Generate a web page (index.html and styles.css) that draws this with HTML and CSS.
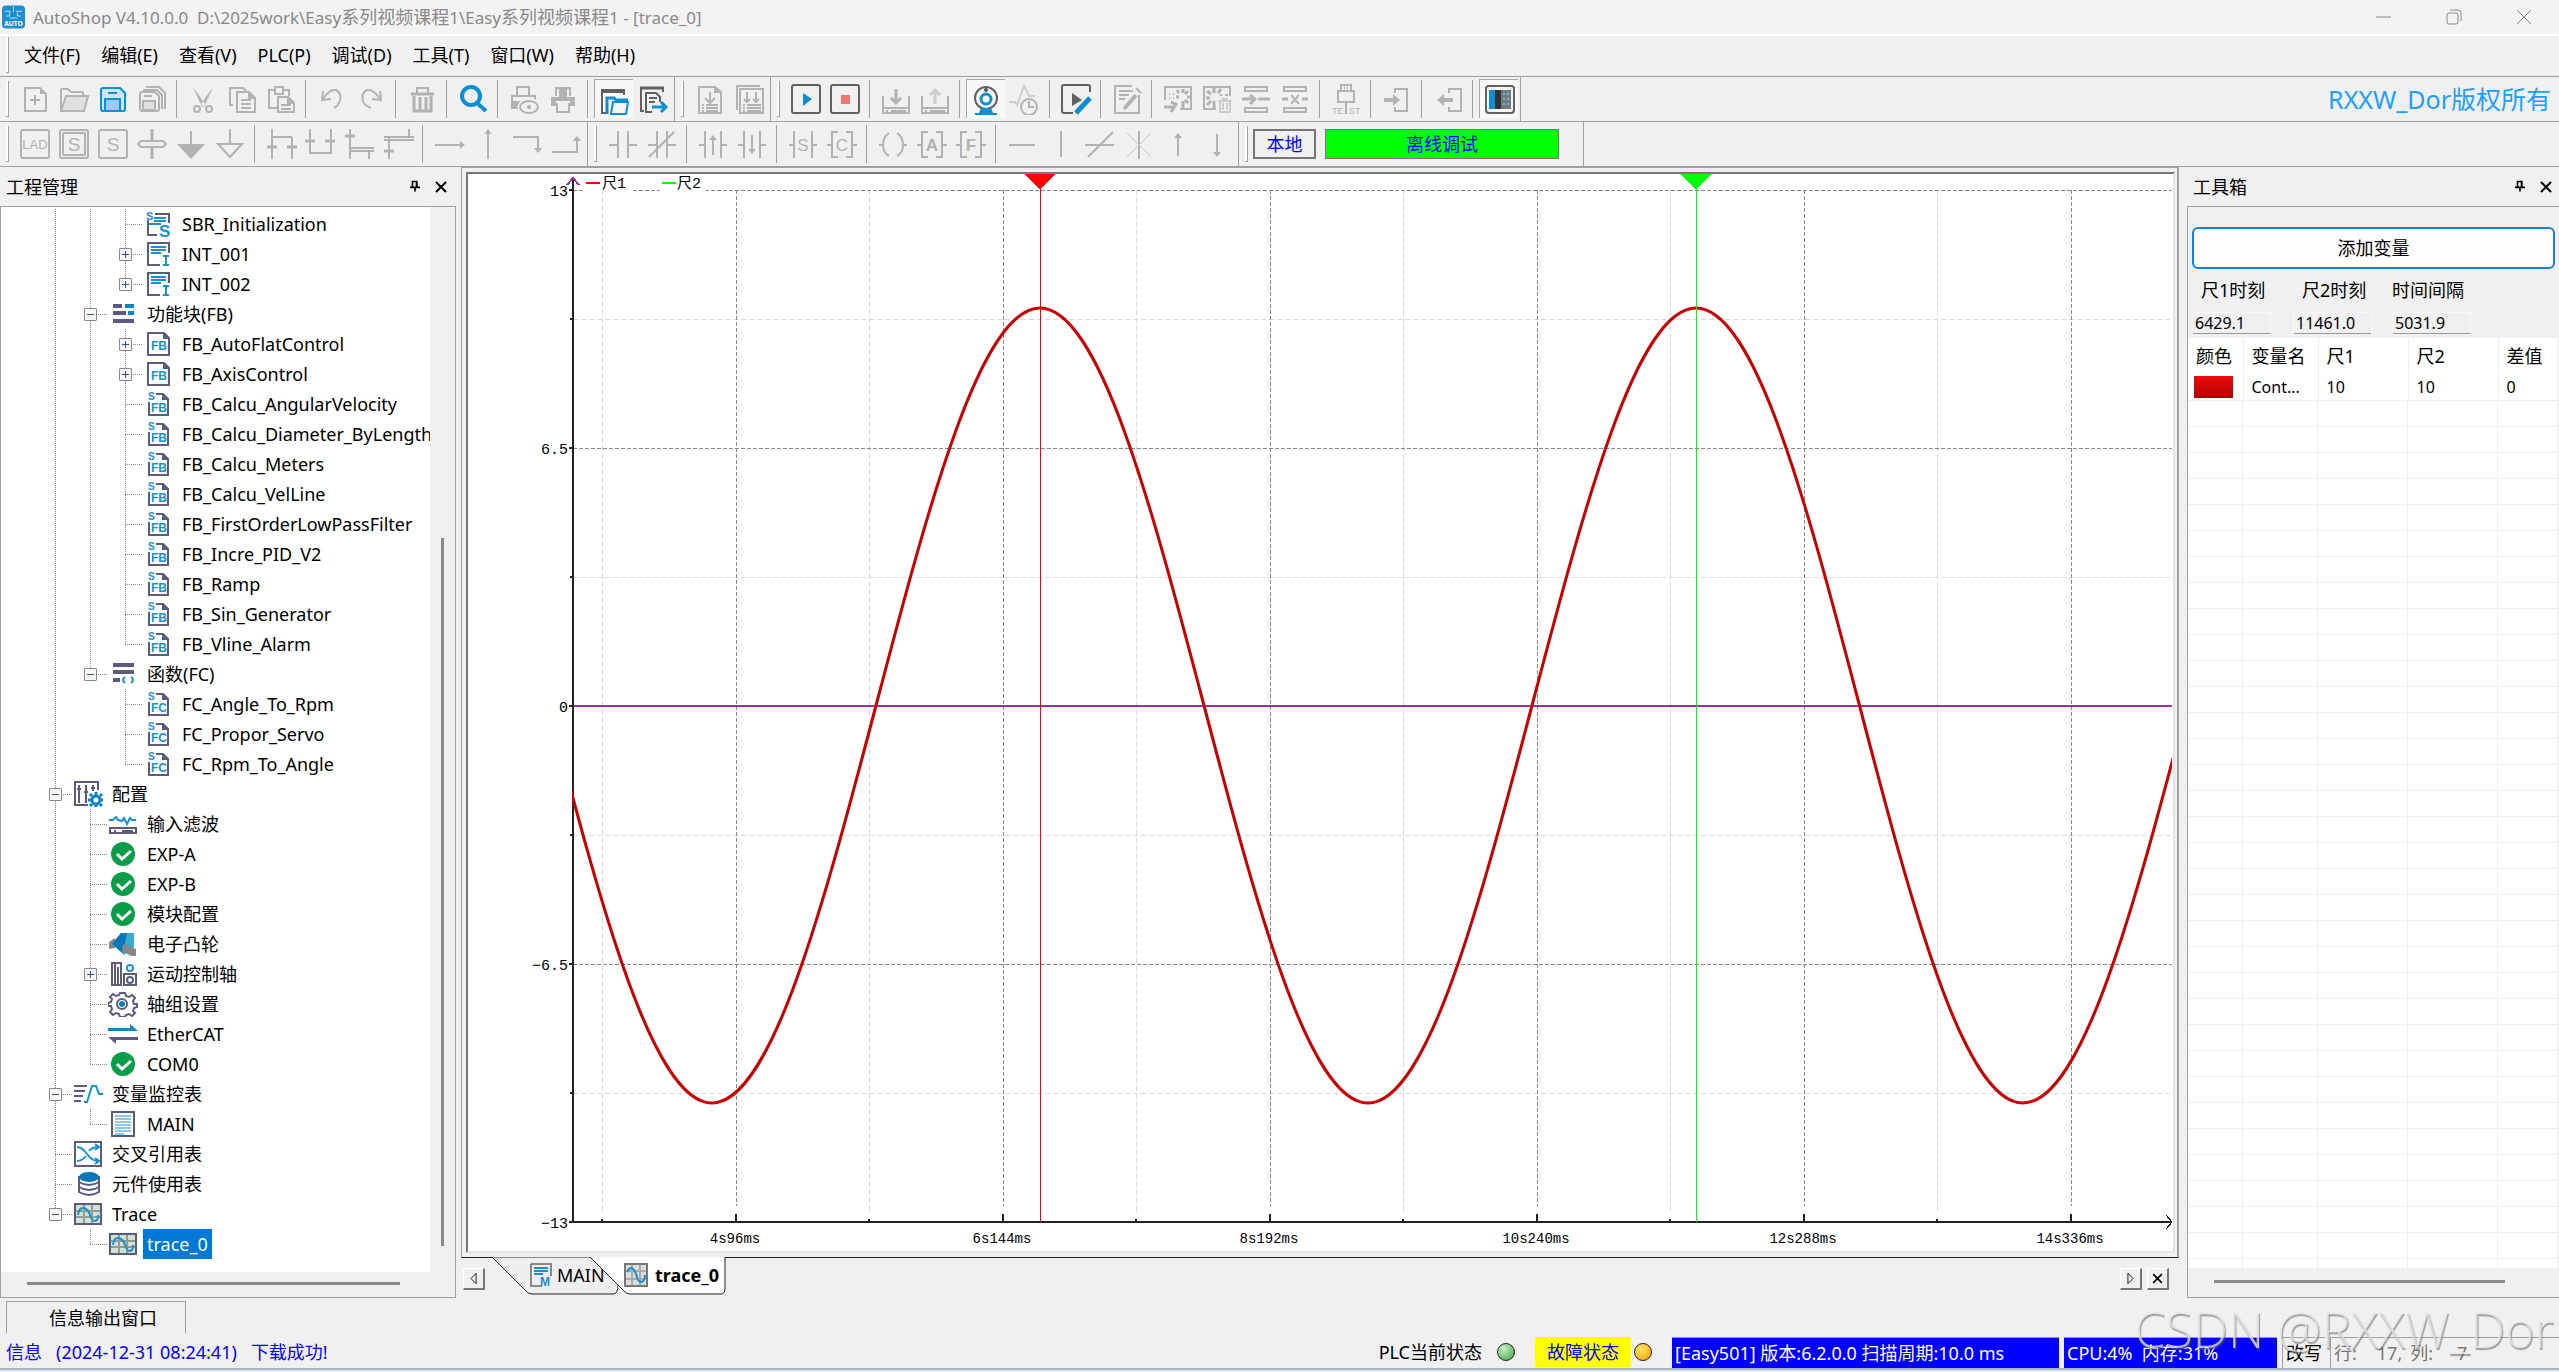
FILE: index.html
```html
<!DOCTYPE html>
<html lang="zh-CN">
<head>
<meta charset="utf-8">
<title>AutoShop V4.10.0.0</title>
<link rel="stylesheet" href="styles.css">
</head>
<body>
<svg class="defs" aria-hidden="true">
  <!-- toolbar icons -->
  <symbol id="new" viewBox="0 0 32 32"><g class="g"><path d="M6 5h15l6 6v17H6zM16 12v10M11 17h10"/><path class="gf" d="M21 5l6 6h-6z"/></g></symbol>
  <symbol id="open" viewBox="0 0 32 32"><g class="g"><path d="M3 27V7q0-1 1-1h6l3 3h11q1 0 1 1v2"/><path class="gl" d="M8 13h22l-4 15H3z"/></g></symbol>
  <symbol id="save" viewBox="0 0 32 32"><path d="M4 7q0-2 2-2h17l5 5v16q0 2-2 2H6q-2 0-2-2z" fill="#cde6f7" stroke="#0a8fd4" stroke-width="2"/><path d="M11 10h9" stroke="#0a8fd4" stroke-width="2"/><path d="M8 28V16h15v12z" fill="#a0c8f0" stroke="#0a8fd4" stroke-width="2"/></symbol>
  <symbol id="saveall" viewBox="0 0 32 32"><g class="g"><path d="M4 11q0-2 2-2h13l4 4v13q0 2-2 2H6q-2 0-2-2zM8 13h8M7 7h14l5 5v14M10 4h13l6 6v16"/><path class="gl" d="M7 27v-9h12v9z"/></g></symbol>
  <symbol id="cut" viewBox="0 0 32 32"><g class="g"><path class="gf" d="M6 4l12 17-3 3zM26 4L14 21l3 3z"/><circle cx="10" cy="26" r="3"/><circle cx="22" cy="26" r="3"/></g></symbol>
  <symbol id="copy" viewBox="0 0 32 32"><g class="g"><path d="M7 22H4V5h13l3 3M11 9h12l6 6v14H11zM15 17h10M15 21h10M15 25h10"/><path class="gf" d="M22 9l7 7h-7z"/></g></symbol>
  <symbol id="paste" viewBox="0 0 32 32"><g class="g"><path d="M12 25H4V7h6V4h8v3h6v6M10 7v4h8V7M13 14h10l6 6v9H13zM16 22h10M16 26h10"/><path class="gf" d="M22 14l7 7h-7z"/></g></symbol>
  <symbol id="undo" viewBox="0 0 32 32"><g class="g"><path d="M7 8l-1 9 9-1M7 16q6-10 13-9 6 3 4 11-2 5-6 7"/></g></symbol>
  <symbol id="redo" viewBox="0 0 32 32"><g class="g"><path d="M25 8l1 9-9-1M25 16Q19 6 12 7q-6 3-4 11 2 5 8 7"/></g></symbol>
  <symbol id="trash" viewBox="0 0 32 32"><g class="g"><path stroke-width="3" d="M5 11h23M8 13v15h17V13M14 14v13M20 14v13"/><path d="M11 10V5h11v5"/></g></symbol>
  <symbol id="search" viewBox="0 0 32 32"><circle cx="14" cy="13" r="9" fill="none" stroke="#0a8fd4" stroke-width="4"/><path d="M20 20l9 8" stroke="#0a8fd4" stroke-width="4"/></symbol>
  <symbol id="preview" viewBox="0 0 32 32"><g class="g"><path d="M9 12V4h12v8M10 25H4V13h23v3"/><path class="gf" d="M4 18h8l-4 8H4z"/><ellipse cx="21" cy="24" rx="9" ry="6"/><circle class="gf" cx="21" cy="24" r="2"/></g></symbol>
  <symbol id="print" viewBox="0 0 32 32"><g class="g"><path d="M9 13V5h14v8M10 20v9h12v-9"/><path class="gf" d="M4 14h24v9h-5v-5H9v5H4zM12 6h8v8h-8z"/></g></symbol>
  <symbol id="project" viewBox="0 0 32 32"><path d="M3 8h24" stroke="#606060" stroke-width="4"/><path d="M4 9v21h4M26 9v3" class="d"/><path d="M9 31V15h7l2 2h12" fill="none" stroke="#0a8fd4" stroke-width="3"/><path d="M15 19h15l-2 12H13z" fill="#f4f4f4" stroke="#0a8fd4" stroke-width="2"/></symbol>
  <symbol id="output" viewBox="0 0 32 32"><path d="M3 5h24" stroke="#606060" stroke-width="3"/><g class="d"><path d="M4 6v22h3M26 6v3M15 29H9V10h10l4 4v5M12 15h8M12 19h6"/></g><path d="M15 24h14M24 19l5 5-5 5" fill="none" stroke="#0a8fd4" stroke-width="3"/></symbol>
  <symbol id="compile" viewBox="0 0 32 32"><g class="g"><path d="M5 4h16l6 5v21H5zM16 9v11M11 15l5 5 5-5M8 22h2M12 22h12M8 25h2M12 25h12M8 28h2M12 28h12"/><path class="gf" d="M20 4l7 6h-7z"/></g></symbol>
  <symbol id="compileall" viewBox="0 0 32 32"><g class="g"><path d="M4 27V3h23M7 6h23v24H7zM14 9v10M11 16l3 3 3-3M23 9v10M20 16l3 3 3-3M10 22h2M14 22h14M10 25h2M14 25h14M10 28h2M14 28h14"/></g></symbol>
  <symbol id="play" viewBox="0 0 32 32"><rect class="d" x="2" y="2" width="28" height="28" rx="2"/><path d="M13 10l9 6-9 7z" fill="#0a8fd4"/></symbol>
  <symbol id="stop" viewBox="0 0 32 32"><rect class="d" x="2" y="2" width="28" height="28" rx="2"/><path d="M12 12h9v9h-9z" fill="#ee7774"/></symbol>
  <symbol id="download" viewBox="0 0 32 32"><g class="g"><path d="M3 13v17h26V13M3 25h26M6 28h2M11 28h15"/><path stroke-width="3" d="M16 6v13M11 15l5 5 5-5"/></g></symbol>
  <symbol id="upload" viewBox="0 0 32 32"><g class="g"><path d="M3 13v17h26V13M3 25h26M6 28h2M11 28h15"/><path stroke-width="3" stroke="#ccc" d="M16 21V8M11 12l5-5 5 5"/></g></symbol>
  <symbol id="monitor" viewBox="0 0 32 32"><circle class="d" cx="16" cy="15" r="11"/><circle cx="16" cy="16" r="5" fill="none" stroke="#0a8fd4" stroke-width="3"/><path d="M11 25h10l2 5h4v2H5v-2h4z" fill="#0a8fd4"/><circle cx="16" cy="7" r="2" fill="#555"/></symbol>
  <symbol id="wave" viewBox="0 0 32 32"><g class="g"><path stroke="#ccc" d="M0 19h6l2 3 7-19 5 10h6"/><circle cx="20" cy="24" r="8"/><path d="M20 18v6h5"/></g></symbol>
  <symbol id="edit" viewBox="0 0 32 32"><path class="d" d="M13 30H4q-2 0-2-2V4q0-2 2-2h24q2 0 2 2v5"/><path d="M12 10l10 7-10 6z" fill="#606060"/><path d="M16 30l14-15" stroke="#0a8fd4" stroke-width="5"/></symbol>
  <symbol id="note" viewBox="0 0 32 32"><g class="g"><path d="M21 3H4v27h24V12M8 8h14M8 12h10M8 16h6"/><path stroke-width="4" d="M13 26l12-14"/><path d="M25 5l5 5"/></g></symbol>
  <symbol id="grid1" viewBox="0 0 32 32"><g class="g"><path d="M3 17V4h26v22H18M7 11h1M11 11h1M7 15h1M11 15h1"/><path stroke-width="3" d="M21 6v4M28 14h-3M26 8l-3 3M15 7l2 3M14 14h3M26 20l-3-3M21 18v8M2 24h10M9 29l6-9M9 19l6 3"/></g></symbol>
  <symbol id="grid2" viewBox="0 0 32 32"><g class="g"><path d="M15 26H3V4h26v9M19 12h2M24 12h3"/><path stroke-width="3" d="M13 5v5M20 6l-3 4M6 8l4 3M5 15h4M6 22l4-4M13 18v8"/><path stroke="#ccc" d="M17 18h14M21 16h6M19 18v11h10V18M22 20v7M26 20v7"/></g></symbol>
  <symbol id="ins" viewBox="0 0 32 32"><g class="g"><path d="M5 4h22v4H5zM5 25h22v4H5z"/><path stroke-width="3" d="M2 16h13M18 16h12M10 12l5 4-5 5"/></g></symbol>
  <symbol id="del" viewBox="0 0 32 32"><g class="g"><path d="M5 4h22v4H5zM5 25h22v4H5z"/><path stroke-width="3" d="M3 16h6M23 16h6"/><path d="M12 12l8 9M20 12l-8 9"/></g></symbol>
  <symbol id="test" viewBox="0 0 32 32"><g class="g"><path d="M11 8V2h10v6M14 5h1M17 5h1M8 8h16v11H8zM16 20v11"/></g><text x="2" y="31" class="gt" font-size="9">TE</text><text x="19" y="31" class="gt" font-size="9">ST</text></symbol>
  <symbol id="login" viewBox="0 0 32 32"><g class="g"><path d="M14 10V6h12v22H14v-4"/><path stroke-width="4" d="M3 17h10"/><path class="gf" d="M12 11l7 6-7 6z"/></g></symbol>
  <symbol id="logout" viewBox="0 0 32 32"><g class="g"><path d="M17 10V6h12v22H17v-4"/><path stroke-width="4" d="M11 17h10"/><path class="gf" d="M12 11l-7 6 7 6z"/></g></symbol>
  <symbol id="plc" viewBox="0 0 32 32"><rect x="3" y="3" width="28" height="27" rx="3" class="d"/><path d="M6 7h6v19H6z" fill="#0a8fd4"/><path d="M12 7h6v19h-6z" fill="#333"/><path d="M18 7h10v19H18z" fill="#777"/><path d="M20 11h2M24 11h2M20 16h2M24 16h2M20 21h2M24 21h2" stroke="#4cc3ee" stroke-width="2"/></symbol>
  <!-- ladder icons -->
  <symbol id="lad" viewBox="0 0 32 32"><rect class="g" x="2" y="2" width="28" height="28" rx="2"/><text x="16" y="21" class="gt" text-anchor="middle" font-size="13">LAD</text></symbol>
  <symbol id="s2" viewBox="0 0 32 32"><rect class="g" x="2" y="2" width="28" height="28" rx="2"/><rect class="g" x="5" y="5" width="22" height="22" rx="1"/><text x="16" y="23" class="gt" text-anchor="middle" font-size="19">S</text></symbol>
  <symbol id="s1" viewBox="0 0 32 32"><rect class="g" x="2" y="2" width="28" height="28" rx="2"/><text x="16" y="23" class="gt" text-anchor="middle" font-size="19">S</text></symbol>
  <symbol id="step" viewBox="0 0 32 32"><g class="g"><path stroke-width="3" d="M16 1v11M16 20v11"/><path d="M5 13h22l3 3-3 3H5l-3-3z"/></g></symbol>
  <symbol id="tri1" viewBox="0 0 32 32"><g class="g"><path d="M16 3v14"/><path class="gf" d="M2 16h28L16 31z"/></g></symbol>
  <symbol id="tri2" viewBox="0 0 32 32"><g class="g"><path d="M16 1v14M4 16h24L16 29z"/></g></symbol>
  <symbol id="b1" viewBox="0 0 32 32"><g class="g"><path d="M7 1v30M27 9v22M7 9h20"/><path stroke-width="3" d="M2 19h10M22 19h10"/></g></symbol>
  <symbol id="b2" viewBox="0 0 32 32"><g class="g"><path d="M6 1v24h21V1"/><path stroke-width="3" d="M1 13h10M21 13h10"/></g></symbol>
  <symbol id="b3" viewBox="0 0 32 32"><g class="g"><path d="M7 1v30M7 20h24M7 23h24M26 24v7"/><path stroke-width="3" d="M2 8h10"/></g></symbol>
  <symbol id="b4" viewBox="0 0 32 32"><g class="g"><path d="M7 8v23M2 9h30M2 12h30M27 1v8"/><path stroke-width="3" d="M2 23h10"/></g></symbol>
  <symbol id="ar" viewBox="0 0 32 32"><g class="g"><path d="M2 17h26"/><path class="gf" d="M27 13l5 4-5 4z"/></g></symbol>
  <symbol id="au" viewBox="0 0 32 32"><g class="g"><path d="M16 4v27"/><path class="gf" d="M12 6l4-5 4 5z"/></g></symbol>
  <symbol id="ard" viewBox="0 0 32 32"><g class="g"><path d="M2 9h25v14"/><path class="gf" d="M23 20l4 5 4-5z"/></g></symbol>
  <symbol id="aru" viewBox="0 0 32 32"><g class="g"><path d="M2 24h25V11"/><path class="gf" d="M23 13l4-5 4 5z"/></g></symbol>
  <symbol id="no" viewBox="0 0 32 32"><g class="g"><path d="M2 17h9M21 17h9M11 3v27M21 3v27"/></g></symbol>
  <symbol id="nc" viewBox="0 0 32 32"><g class="g"><path d="M2 17h9M21 17h9M11 3v27M21 3v27M3 29L28 4"/></g></symbol>
  <symbol id="rise" viewBox="0 0 32 32"><g class="g"><path d="M2 17h6M24 17h6M8 3v27M24 3v27M16 8v19"/><path class="gf" d="M12 12l4-5 4 5z"/></g></symbol>
  <symbol id="fall" viewBox="0 0 32 32"><g class="g"><path d="M2 17h6M24 17h6M8 3v27M24 3v27M16 7v18"/><path class="gf" d="M12 21l4 5 4-5z"/></g></symbol>
  <symbol id="cs" viewBox="0 0 32 32"><g class="g"><path d="M2 17h5M25 17h5M7 3v27M25 3v27"/></g><text x="16" y="23" class="gt" text-anchor="middle" font-size="17">S</text></symbol>
  <symbol id="cc" viewBox="0 0 32 32"><g class="g"><path d="M1 17h5M26 17h5M12 4H6v25h6M20 4h6v25h-6"/></g><text x="16" y="23" class="gt" text-anchor="middle" font-size="17">C</text></symbol>
  <symbol id="coil" viewBox="0 0 32 32"><g class="g"><path d="M2 17h4M26 17h4M12 5q-6 4-6 12t6 11M20 5q6 4 6 12t-6 11"/></g></symbol>
  <symbol id="ca" viewBox="0 0 32 32"><g class="g"><path d="M1 17h5M26 17h5M12 4H6v25h6M20 4h6v25h-6"/></g><text x="16" y="23" class="gt" text-anchor="middle" font-size="17" font-weight="700">A</text></symbol>
  <symbol id="cf" viewBox="0 0 32 32"><g class="g"><path d="M1 17h5M26 17h5M12 4H6v25h6M20 4h6v25h-6"/></g><text x="16" y="23" class="gt" text-anchor="middle" font-size="17" font-weight="700">F</text></symbol>
  <symbol id="hl" viewBox="0 0 32 32"><path class="g" d="M3 17h26"/></symbol>
  <symbol id="vl" viewBox="0 0 32 32"><path class="g" d="M16 3v26"/></symbol>
  <symbol id="sl" viewBox="0 0 32 32"><path class="g" d="M1 17h29M4 29L29 4"/></symbol>
  <symbol id="ast" viewBox="0 0 32 32"><path class="g" d="M16 3v28"/><path fill="none" stroke="#c4c4c4" d="M4 5l24 24M28 5L4 29"/></symbol>
  <symbol id="up" viewBox="0 0 32 32"><g class="g"><path d="M16 8v20"/><path class="gf" d="M12 10l4-5 4 5z"/></g></symbol>
  <symbol id="dn" viewBox="0 0 32 32"><g class="g"><path d="M16 6v20"/><path class="gf" d="M12 24l4 5 4-5z"/></g></symbol>
  <!-- tree icons, 30 x 26 -->
  <symbol id="t-sbr" viewBox="0 0 30 26"><path class="p" d="M5 9v15h9M12 3h14v9"/><path class="b" d="M11 7h12M11 10h12M6 13h12"/><text x="3" y="9" class="bt" font-size="11">S</text><text x="16" y="26" class="bt" font-size="17">S</text></symbol>
  <symbol id="t-int" viewBox="0 0 30 26"><path class="p" d="M17 24H5V2h21v10"/><path class="b" d="M8 6h15M8 9h15M8 12h10M20 15h6M20 24h6M23 15v9"/></symbol>
  <symbol id="t-fbs" viewBox="0 0 30 26"><path d="M5 3h9v4H5zM5 10h13v4H5zM5 18h21v4H5z" fill="#5b5b7e"/><path d="M17 3h9v4h-9zM20 10h6v4h-6z" fill="#0a84c4"/></symbol>
  <symbol id="t-fcs" viewBox="0 0 30 26"><path d="M5 2h21v4H5zM5 9h21v4H5zM5 17h7v4H5z" fill="#5b5b7e"/><path class="b" d="M17 16q-4 3 0 6M23 16q4 3 0 6"/></symbol>
  <symbol id="t-fb" viewBox="0 0 30 26"><path class="p" d="M5 2h16l5 5v17H5z"/><path d="M20 1l7 7h-7z" fill="#5b5b7e"/><text x="16" y="19" text-anchor="middle" class="bt" font-size="12">FB</text></symbol>
  <symbol id="t-fbl" viewBox="0 0 30 26"><path class="p" d="M6 11v13h19V8l-5-5h-7"/><path d="M19 2l7 7h-7z" fill="#5b5b7e"/><text x="16" y="21" text-anchor="middle" class="bt" font-size="12">FB</text><text x="5" y="9" class="bt" font-size="10">S</text></symbol>
  <symbol id="t-fc" viewBox="0 0 30 26"><path class="p" d="M6 11v13h19V8l-5-5h-7"/><path d="M19 2l7 7h-7z" fill="#5b5b7e"/><text x="16" y="21" text-anchor="middle" class="bt" font-size="12">FC</text><text x="5" y="9" class="bt" font-size="10">S</text></symbol>
  <symbol id="t-cfg" viewBox="0 0 30 26"><path class="p" d="M15 24H2V1h23v8M6 4v18M13 4v18M20 4v6M4 8h4M11 11h4M18 7h4"/><circle cx="23" cy="19" r="4" fill="none" stroke="#0a84c4" stroke-width="3"/><path d="M23 11v3M23 24v2M15 19h3M28 19h2M17 13l2 2M29 13l-2 2M17 25l2-2M29 25l-2-2" stroke="#0a84c4" stroke-width="3"/></symbol>
  <symbol id="t-flt" viewBox="0 0 30 26"><path class="b" d="M1 9h4l3-3 2 3 4 1 2-3 3 6 3-6 2 2h4"/><path class="p" d="M2 17h26v5H2zM6 20h2M14 20h11"/></symbol>
  <symbol id="t-ok" viewBox="0 0 30 26"><circle cx="15" cy="13" r="12" fill="#0a9c48"/><path d="M9 13l5 5 9-8" fill="none" stroke="#fff" stroke-width="3"/></symbol>
  <symbol id="t-cam" viewBox="0 0 30 26"><path d="M1 11l6-4v10l-6 1z" fill="#888"/><path d="M4 13L13 2h13v14l-10 8z" fill="#3aa9cf"/><path d="M4 13L13 2l6 0-4 20z" fill="#0a78b8"/><path d="M15 13l13 5v7h-5l-9-5z" fill="#888"/></symbol>
  <symbol id="t-axis" viewBox="0 0 30 26"><path class="p" d="M4 2h9v22H4zM7 2v22M10 6v18M16 13h12v11H16z"/><circle class="p" cx="22" cy="19" r="3"/><circle class="b" cx="22" cy="7" r="3"/></symbol>
  <symbol id="t-gear" viewBox="0 0 30 26"><path class="p" d="M12 2h5l1 3 3 1 3-2 3 3-2 3 1 3 3 0v3l-3 1-1 3 2 2-3 3-3-2-3 1-1 2h-5l-1-3-3-1-3 2-3-3 2-3-1-3-3 0v-3l3-1 1-3-2-2 3-3 3 2 3-1z"/><circle cx="14" cy="13" r="3" fill="#0a84c4"/><circle class="p" cx="14" cy="13" r="5"/></symbol>
  <symbol id="t-eth" viewBox="0 0 30 26"><path d="M0 7h22V3l8 7H0z" fill="#0a84c4"/><path d="M30 19H8v4l-8-7h30z" fill="#5b5b7e"/></symbol>
  <symbol id="t-var" viewBox="0 0 30 26"><path class="p" d="M1 5h13M1 10h11M1 15h9M1 20h7"/><path class="b" d="M11 21h3l5-16h4l3 8h4"/></symbol>
  <symbol id="t-main" viewBox="0 0 30 26"><path class="p" d="M4 1h22v24H4z"/><path class="b" d="M7 5h16M7 8h16M7 11h16M7 14h16M7 17h16M7 20h16M7 23h9" style="stroke-width:1"/></symbol>
  <symbol id="t-x" viewBox="0 0 30 26"><path class="p" d="M2 1h26v24H2z"/><path class="b" d="M4 6q5 0 10 7t11 7M4 20q5 0 9-5M16 10q3-4 9-4M22 3l4 3-4 3M22 17l4 3-4 3"/></symbol>
  <symbol id="t-db" viewBox="0 0 30 26"><path d="M6 5v16q10 7 20 0V5" fill="#fff"/><path class="p" d="M6 5v16q10 6 20 0V5M6 11q10 6 20 0M6 16q10 6 20 0"/><ellipse cx="16" cy="6" rx="10" ry="5" fill="#0a78b8"/></symbol>
  <symbol id="t-tr" viewBox="0 0 30 26"><path d="M2 3h26v20H2z" fill="#cfe3d0" stroke="#5b5b7e" stroke-width="2"/><path d="M11 4v18M19 4v18M3 10h24M3 16h24" stroke="#999" stroke-width="2"/><path class="b" d="M5 14q1-8 6-7 4 1 6 7t5 6q3 0 3-6"/></symbol>
  <symbol id="pin" viewBox="0 0 12 14"><path d="M3 8V1h5v7M0 8h12M6 8v5" fill="none" stroke="#000" stroke-width="2"/><path d="M7 1h2v7H7z"/></symbol>
  <symbol id="cross" viewBox="0 0 12 12"><path d="M1 1l10 10M11 1L1 11" stroke="#000" stroke-width="2"/></symbol>
</svg>

<header class="title">
  <svg class="logo" viewBox="0 0 24 24"><rect width="24" height="24" rx="4" fill="#1b8fd2"/><path d="M3 6h6M15 6h6M12 1v6M4 11h4V7M20 11h-4V7M8 13h8" stroke="#bfe3fa" stroke-width="1" fill="none"/><text x="12" y="21" text-anchor="middle" font-size="7" font-weight="700" fill="#fff">AUTO</text></svg>
  <span>AutoShop V4.10.0.0&nbsp; D:\2025work\Easy<span class="zh">系列视频课程</span>1\Easy<span class="zh">系列视频课程</span>1 - [trace_0]</span>
  <div class="winbtns">
    <button aria-label="最小化"><svg width="16" height="16"><path d="M0 8h15" stroke="#888"/></svg></button>
    <button aria-label="还原"><svg width="16" height="16" fill="none" stroke="#888"><rect x="1" y="4" width="11" height="11" rx="2"/><path d="M4 1h8q3 0 3 3v8"/></svg></button>
    <button aria-label="关闭"><svg width="16" height="16"><path d="M1 1l14 14M15 1L1 15" stroke="#888"/></svg></button>
  </div>
</header>

<nav class="menu">
  <i class="grip"></i>
  <button>文件(F)</button><button>编辑(E)</button><button>查看(V)</button><button>PLC(P)</button><button>调试(D)</button><button>工具(T)</button><button>窗口(W)</button><button>帮助(H)</button>
</nav>

<div class="bar">
  <div class="band"><i class="grip"></i>
    <button aria-label="新建"><svg><use href="#new"/></svg></button><button aria-label="打开"><svg><use href="#open"/></svg></button><button aria-label="保存"><svg><use href="#save"/></svg></button><button aria-label="全部保存"><svg><use href="#saveall"/></svg></button><i class="sep"></i>
    <button aria-label="剪切"><svg><use href="#cut"/></svg></button><button aria-label="复制"><svg><use href="#copy"/></svg></button><button aria-label="粘贴"><svg><use href="#paste"/></svg></button><i class="sep"></i>
    <button aria-label="撤销"><svg><use href="#undo"/></svg></button><button aria-label="重做"><svg><use href="#redo"/></svg></button><i class="sep"></i>
    <button aria-label="删除"><svg><use href="#trash"/></svg></button><i class="sep"></i>
    <button aria-label="查找"><svg><use href="#search"/></svg></button><i class="sep"></i>
    <button aria-label="打印预览"><svg><use href="#preview"/></svg></button><button aria-label="打印"><svg><use href="#print"/></svg></button><i class="sep"></i>
    <button class="on" aria-label="工程管理"><svg><use href="#project"/></svg></button><button aria-label="信息输出"><svg><use href="#output"/></svg></button>
  </div>
  <div class="band"><i class="grip"></i>
    <button aria-label="编译"><svg><use href="#compile"/></svg></button><button aria-label="全部编译"><svg><use href="#compileall"/></svg></button>
  </div>
  <div class="band"><i class="grip"></i>
    <button aria-label="运行"><svg><use href="#play"/></svg></button><button aria-label="停止"><svg><use href="#stop"/></svg></button><i class="sep"></i>
    <button aria-label="下载"><svg><use href="#download"/></svg></button><button aria-label="上传"><svg><use href="#upload"/></svg></button><i class="sep"></i>
    <button class="on" aria-label="监控"><svg><use href="#monitor"/></svg></button><button aria-label="示波"><svg><use href="#wave"/></svg></button><i class="sep"></i>
    <button aria-label="在线修改"><svg><use href="#edit"/></svg></button><i class="sep"></i>
    <button aria-label="注释"><svg><use href="#note"/></svg></button><i class="sep"></i>
    <button aria-label="插入网络"><svg><use href="#grid1"/></svg></button><button aria-label="删除网络"><svg><use href="#grid2"/></svg></button><button aria-label="插入行"><svg><use href="#ins"/></svg></button><button aria-label="删除行"><svg><use href="#del"/></svg></button><i class="sep"></i>
    <button aria-label="测试"><svg><use href="#test"/></svg></button><i class="sep"></i>
    <button aria-label="登录"><svg><use href="#login"/></svg></button><i class="sep"></i>
    <button aria-label="退出"><svg><use href="#logout"/></svg></button><i class="sep"></i>
    <button class="on" aria-label="工具箱"><svg><use href="#plc"/></svg></button>
  </div>
  <span class="owner">RXXW_Dor版权所有</span>
</div>

<div class="bar">
  <div class="band"><i class="grip"></i>
    <button aria-label="LAD"><svg><use href="#lad"/></svg></button><button aria-label="初始步"><svg><use href="#s2"/></svg></button><button aria-label="步"><svg><use href="#s1"/></svg></button><button aria-label="转移"><svg><use href="#step"/></svg></button><button aria-label="跳转"><svg><use href="#tri1"/></svg></button><button aria-label="复位"><svg><use href="#tri2"/></svg></button><i class="sep"></i>
    <button aria-label="选择分支"><svg><use href="#b1"/></svg></button><button aria-label="选择合并"><svg><use href="#b2"/></svg></button><button aria-label="并行分支"><svg><use href="#b3"/></svg></button><button aria-label="并行合并"><svg><use href="#b4"/></svg></button><i class="sep"></i>
    <button aria-label="右"><svg><use href="#ar"/></svg></button><button aria-label="上"><svg><use href="#au"/></svg></button><button aria-label="右下"><svg><use href="#ard"/></svg></button><button aria-label="右上"><svg><use href="#aru"/></svg></button>
  </div>
  <div class="band"><i class="grip"></i>
    <button aria-label="常开"><svg><use href="#no"/></svg></button><button aria-label="常闭"><svg><use href="#nc"/></svg></button><i class="sep"></i>
    <button aria-label="上升沿"><svg><use href="#rise"/></svg></button><button aria-label="下降沿"><svg><use href="#fall"/></svg></button><i class="sep"></i>
    <button aria-label="S触点"><svg><use href="#cs"/></svg></button><button aria-label="比较"><svg><use href="#cc"/></svg></button><i class="sep"></i>
    <button aria-label="线圈"><svg><use href="#coil"/></svg></button><button aria-label="应用指令"><svg><use href="#ca"/></svg></button><button aria-label="功能块"><svg><use href="#cf"/></svg></button><i class="sep"></i>
    <button aria-label="横线"><svg><use href="#hl"/></svg></button><button aria-label="竖线"><svg><use href="#vl"/></svg></button><button aria-label="取反"><svg><use href="#sl"/></svg></button><button aria-label="删除线"><svg><use href="#ast"/></svg></button><button aria-label="上移"><svg><use href="#up"/></svg></button><button aria-label="下移"><svg><use href="#dn"/></svg></button>
  </div>
  <div class="band debug"><i class="grip"></i>
    <button class="local">本地</button><button class="offline">离线调试</button>
  </div>
</div>

<main>
  <aside class="panel left">
    <h2>工程管理<svg class="pin"><use href="#pin"/></svg><svg class="cross"><use href="#cross"/></svg></h2>
    <div class="box">
      <div class="treewrap">
      <ul class="tree">
        <li class="cont"><ul>
          <li class="cont"><ul>
            <li><div class="row"><i></i><svg><use href="#t-sbr"/></svg><span>SBR_Initialization</span></div></li>
            <li><div class="row"><i class="tg plus"></i><svg><use href="#t-int"/></svg><span>INT_001</span></div></li>
            <li><div class="row"><i class="tg plus"></i><svg><use href="#t-int"/></svg><span>INT_002</span></div></li>
          </ul></li>
          <li><div class="row"><i class="tg"></i><svg><use href="#t-fbs"/></svg><span>功能块(FB)</span></div><ul>
            <li><div class="row"><i class="tg plus"></i><svg><use href="#t-fb"/></svg><span>FB_AutoFlatControl</span></div></li>
            <li><div class="row"><i class="tg plus"></i><svg><use href="#t-fb"/></svg><span>FB_AxisControl</span></div></li>
            <li><div class="row"><i></i><svg><use href="#t-fbl"/></svg><span>FB_Calcu_AngularVelocity</span></div></li>
            <li><div class="row"><i></i><svg><use href="#t-fbl"/></svg><span>FB_Calcu_Diameter_ByLength</span></div></li>
            <li><div class="row"><i></i><svg><use href="#t-fbl"/></svg><span>FB_Calcu_Meters</span></div></li>
            <li><div class="row"><i></i><svg><use href="#t-fbl"/></svg><span>FB_Calcu_VelLine</span></div></li>
            <li><div class="row"><i></i><svg><use href="#t-fbl"/></svg><span>FB_FirstOrderLowPassFilter</span></div></li>
            <li><div class="row"><i></i><svg><use href="#t-fbl"/></svg><span>FB_Incre_PID_V2</span></div></li>
            <li><div class="row"><i></i><svg><use href="#t-fbl"/></svg><span>FB_Ramp</span></div></li>
            <li><div class="row"><i></i><svg><use href="#t-fbl"/></svg><span>FB_Sin_Generator</span></div></li>
            <li><div class="row"><i></i><svg><use href="#t-fbl"/></svg><span>FB_Vline_Alarm</span></div></li>
          </ul></li>
          <li><div class="row"><i class="tg"></i><svg><use href="#t-fcs"/></svg><span>函数(FC)</span></div><ul>
            <li><div class="row"><i></i><svg><use href="#t-fc"/></svg><span>FC_Angle_To_Rpm</span></div></li>
            <li><div class="row"><i></i><svg><use href="#t-fc"/></svg><span>FC_Propor_Servo</span></div></li>
            <li><div class="row"><i></i><svg><use href="#t-fc"/></svg><span>FC_Rpm_To_Angle</span></div></li>
          </ul></li>
        </ul></li>
        <li><div class="row"><i class="tg"></i><svg><use href="#t-cfg"/></svg><span>配置</span></div><ul>
          <li><div class="row"><i></i><svg><use href="#t-flt"/></svg><span>输入滤波</span></div></li>
          <li><div class="row"><i></i><svg><use href="#t-ok"/></svg><span>EXP-A</span></div></li>
          <li><div class="row"><i></i><svg><use href="#t-ok"/></svg><span>EXP-B</span></div></li>
          <li><div class="row"><i></i><svg><use href="#t-ok"/></svg><span>模块配置</span></div></li>
          <li><div class="row"><i></i><svg><use href="#t-cam"/></svg><span>电子凸轮</span></div></li>
          <li><div class="row"><i class="tg plus"></i><svg><use href="#t-axis"/></svg><span>运动控制轴</span></div></li>
          <li><div class="row"><i></i><svg><use href="#t-gear"/></svg><span>轴组设置</span></div></li>
          <li><div class="row"><i></i><svg><use href="#t-eth"/></svg><span>EtherCAT</span></div></li>
          <li><div class="row"><i></i><svg><use href="#t-ok"/></svg><span>COM0</span></div></li>
        </ul></li>
        <li><div class="row"><i class="tg"></i><svg><use href="#t-var"/></svg><span>变量监控表</span></div><ul>
          <li><div class="row"><i></i><svg><use href="#t-main"/></svg><span>MAIN</span></div></li>
        </ul></li>
        <li><div class="row"><i></i><svg><use href="#t-x"/></svg><span>交叉引用表</span></div></li>
        <li><div class="row"><i></i><svg><use href="#t-db"/></svg><span>元件使用表</span></div></li>
        <li><div class="row"><i class="tg"></i><svg><use href="#t-tr"/></svg><span>Trace</span></div><ul>
          <li><div class="row"><i></i><svg><use href="#t-tr"/></svg><span class="sel">trace_0</span></div></li>
        </ul></li>
      </ul>
      <div class="vscroll"><i></i></div>
      </div>
      <div class="hscroll"><i></i></div>
    </div>
  </aside>

  <section class="mdi">
    <div class="frame"><div class="canvas">
      <svg viewBox="468 174 1705 1077" class="chart" role="img" aria-label="trace_0">
        <g class="minor">
          <path d="M602 190V1211M869 190V1211M1136 190V1211M1403 190V1211M1670 190V1211M1937 190V1211M573 319H2172M573 577H2172M573 835H2172M573 1093H2172"/>
        </g>
        <g class="major">
          <path d="M736 190V1206M1003 190V1206M1270 190V1206M1537 190V1206M1804 190V1206M2071 190V1206M573 190H2172M573 448H2172M573 964H2172"/>
        </g>
        <path d="M573 706H2172" stroke="#800080" stroke-width="2" opacity=".8"/>
        <path class="axis" d="M573 180V1222H2172M569 190h4M570 319h3M569 448h4M570 577h3M569 706h4M570 835h3M569 964h4M570 1093h3M569 1222h4M736 1214v8M1003 1214v8M1270 1214v8M1537 1214v8M1804 1214v8M2071 1214v8M602 1219v3M869 1219v3M1136 1219v3M1403 1219v3M1670 1219v3M1937 1219v3"/>
        <path d="M2166 1215l6 7-6 7" fill="none" stroke="#111"/>
        <path d="M567 185l6-7 6 7" fill="none" stroke="#a030a0" stroke-width="2"/>
        <path d="M584 176h48v16h-48zM660 176h46v16h-46z" fill="#fff"/>
        <path d="M586 183h14" stroke="#f00" stroke-width="2"/><path d="M662 183h14" stroke="#0f0" stroke-width="2"/>
        <g class="lbl"><text x="602" y="188">尺1</text><text x="677" y="188">尺2</text></g>
        <g class="lbl end"><text x="568" y="196">13</text><text x="568" y="454">6.5</text><text x="568" y="712">0</text><text x="568" y="970">−6.5</text><text x="568" y="1228">−13</text></g>
        <g class="lbl mid"><text x="735" y="1243">4s96ms</text><text x="1002" y="1243">6s144ms</text><text x="1269" y="1243">8s192ms</text><text x="1536" y="1243">10s240ms</text><text x="1803" y="1243">12s288ms</text><text x="2070" y="1243">14s336ms</text></g>
        <clipPath id="plot"><path d="M572 190H2172V1222H572z"/></clipPath>
        <path clip-path="url(#plot)" d="M385 308C504 308 593 1103 712 1103S921 308 1040 308 1249 1103 1368 1103 1577 308 1696 308 1904 1103 2023 1103 2232 308 2351 308" class="curve"/>
        <path d="M1040 188V1222" stroke="#f00"/><path d="M1025 174h30l-15 16z" fill="#f00"/>
        <path d="M1696 188V1222" stroke="#0f0"/><path d="M1681 174h30l-15 16z" fill="#0f0"/>
      </svg>
    </div></div>
    <div class="tabs">
      <button class="sq" aria-label="向左"><svg viewBox="0 0 22 22"><path d="M14 5v12l-6-6z" fill="none" stroke="#000"/></svg></button>
      <button class="tab t1"><svg class="shape" viewBox="0 0 126 38"><path d="M0 0l33 33q3 4 7 4h82q4-1 4-9V0z" fill="#efefef" stroke="#222"/></svg><svg class="ic" viewBox="0 0 24 24"><path d="M2 1h20v12M2 1v22h11" fill="none" stroke="#888" stroke-width="2"/><path class="b" d="M5 5h14M5 8h14M5 11h9"/><text x="11" y="23" class="bt" font-size="12">M</text></svg>MAIN</button>
      <button class="tab t2"><svg class="shape" viewBox="0 0 136 38"><path d="M0 0l33 33q3 4 7 4h92q3-1 3-5V0" fill="#fff" stroke="#222"/><path d="M1 0h133" stroke="#fff" stroke-width="2"/></svg><svg class="ic" viewBox="0 0 24 24"><path d="M1 1h22v22H1z" fill="#ddd" stroke="#777" stroke-width="2"/><path d="M8 2v20M16 2v20M2 8h20M2 16h20" stroke="#aaa" stroke-width="2"/><path class="b" d="M3 9q3-6 6-3 3 3 4 8t5 5q3-2 3-7"/></svg><b>trace_0</b></button>
      <div class="grow"></div>
      <button class="sq" aria-label="向右"><svg viewBox="0 0 22 22"><path d="M8 5v12l6-6z" fill="none" stroke="#000"/></svg></button>
      <button class="sq" aria-label="关闭"><svg viewBox="0 0 22 22"><path d="M6 6l10 10M16 6L6 16" stroke="#000" stroke-width="2"/></svg></button>
    </div>
  </section>

  <aside class="panel right">
    <h2>工具箱<svg class="pin"><use href="#pin"/></svg><svg class="cross"><use href="#cross"/></svg></h2>
    <div class="box">
      <button class="add">添加变量</button>
      <div class="times">
        <label>尺1时刻<input value="6429.1"></label>
        <label>尺2时刻<input value="11461.0"></label>
        <label class="wide">时间间隔<input value="5031.9"></label>
      </div>
      <div class="tablewrap">
      <table>
        <colgroup><col class="c1"><col class="c2"><col class="c3"><col class="c3"><col></colgroup>
        <thead><tr><th>颜色</th><th>变量名</th><th>尺1</th><th>尺2</th><th>差值</th></tr></thead>
        <tbody><tr><td><i class="swatch"></i></td><td>Cont...</td><td>10</td><td>10</td><td>0</td></tr></tbody>
      </table>
      <div class="lines"><i class="c1"></i><i class="c2"></i><i class="c3"></i><i class="c3"></i><i class="rest"></i></div>
      </div>
      <div class="hscroll"><i></i></div>
    </div>
  </aside>
</main>

<div class="outtabs"><button>信息输出窗口</button></div>
<footer>
  <div class="msg"><span>信息</span><span>(2024-12-31 08:24:41)</span><span>下载成功!</span></div>
  <span class="plcstate">PLC当前状态</span><i class="led green"></i>
  <span class="fault">故障状态</span><i class="led orange"></i>
  <span class="blue ver">[Easy501] 版本:6.2.0.0 扫描周期:10.0 ms</span>
  <span class="blue cpu">CPU:4%&nbsp; 内存:31%</span>
  <span class="cell mode">改写</span>
  <span class="cell pos"><span>行:</span><span>17,</span><span>列:</span><span>7</span></span>
</footer>
<div class="edge"></div>
<div class="mark">CSDN @RXXW_Dor</div>
</body>
</html>
```
FILE: styles.css
```css
* { box-sizing: border-box; }
body {
  margin: 0; height: 100vh; overflow: hidden; display: flex; flex-direction: column;
  background: #f0f0f0; color: #000;
  font: 18px/24px "Noto Sans", "Noto Sans CJK SC", sans-serif;
}
button { font: inherit; color: inherit; background: none; border: 0; padding: 0; margin: 0; }
ul { list-style: none; margin: 0; padding: 0; }
svg { display: block; flex: none; }
.defs { position: absolute; width: 0; height: 0; }

/* shared icon strokes */
.g { fill: none; stroke: #b2b2b2; stroke-width: 2; }
.gf { fill: #b2b2b2; stroke: none; }
.gl { fill: #e0e0e0; }
.gt { fill: #b2b2b2; font-family: "Liberation Sans", sans-serif; }
.d { fill: none; stroke: #606060; stroke-width: 2; }
.p { fill: none; stroke: #5b5b7e; stroke-width: 2; }
.b { fill: none; stroke: #1a90cc; stroke-width: 2; }
.bt { fill: #1a90cc; font-family: "Liberation Sans", sans-serif; font-weight: 700; }

.title { height: 36px; display: flex; align-items: center; background: #f3f3f3; border-bottom: 2px solid #fff; color: #888; font-size: 17px; }
.zh { font-size: 18px; }
.logo { width: 23px; height: 24px; margin: 0 8px 0 2px; }
.winbtns { margin-left: auto; display: flex; }
.winbtns button { width: 70px; height: 34px; display: grid; place-items: center; }

.menu { height: 41px; display: flex; align-items: center; gap: 1px; padding-bottom: 2px; border-bottom: 1px solid #a0a0a0; }
.menu .grip { margin-right: 4px; }
.menu button { padding: 0 10px; height: 36px; }
.grip { flex: none; width: 3px; height: 36px; margin: 0 6px; border: solid #a0a0a0; border-width: 0 1px 1px 0; background: #fff; }

.bar { height: 45px; display: flex; border-bottom: 1px solid #a0a0a0; }
.band { display: flex; align-items: center; padding: 0 2px 1px 0; border-right: 1px solid #a0a0a0; }
.band button { width: 39px; height: 39px; display: grid; place-items: center; }
.band svg { width: 32px; height: 32px; }
.band .on { background: #f8f8f8; border: solid #a8a8a8; border-width: 1px 0 0 1px; }
.sep { width: 1px; height: 38px; margin: 0 6px 0 5px; background: #a0a0a0; }
.owner { margin: auto 8px auto auto; font-size: 25px; line-height: 32px; color: #1e9fff; }
.debug { padding-right: 24px; gap: 9px; }
.debug .grip { margin-right: -4px; }
.band .local { width: 63px; height: 30px; border: 2px solid #777; color: #00f; }
.band .offline { width: 234px; height: 30px; background: #0f0; border: 1px solid #777; color: #00f; }

main { flex: 1; min-height: 0; display: grid; grid-template-columns: 461px minmax(0, 1fr) 372px; column-gap: 0; }
.panel { display: flex; flex-direction: column; min-height: 0; }
.panel h2 { margin: 0; height: 39px; padding: 0 7px 0 6px; display: flex; align-items: center; font-size: 18px; font-weight: 400; }
.pin { width: 10px; height: 13px; margin-left: auto; }
.cross { width: 12px; height: 12px; margin-left: 15px; }
.box { flex: 1; min-height: 0; display: flex; flex-direction: column; border: 1px solid #a0a0a0; }
.left { padding-right: 5px; }
.left h2 { padding-right: 9px; }
.treewrap { flex: 1; min-height: 0; display: flex; }
.tree { flex: 1; min-width: 0; overflow: hidden; background: #fff; padding: 2px 0 0 37px; }
.tree li > ul { margin-left: 35px; }
.tree li {
  background:
    repeating-linear-gradient(#888 0 1px, transparent 1px 2px) 17px 0 / 1px 100% no-repeat,
    repeating-linear-gradient(90deg, #888 0 1px, transparent 1px 2px) 17px 15px / 18px 1px no-repeat;
}
.tree li:last-child { background-size: 1px 15px, 18px 1px; }
.tree li.cont { background-size: 1px 100%, 0 0; }
.row { display: flex; align-items: center; height: 30px; }
.row > i { flex: none; width: 35px; height: 14px; }
.row > .tg {
  width: 13px; height: 13px; margin: 0 11px; border: 1px solid #888; border-radius: 1px;
  background: linear-gradient(#3c50a0, #3c50a0) center / 7px 1px no-repeat, #f6f6f6;
}
.row > .tg.plus {
  background: linear-gradient(#3c50a0, #3c50a0) center / 7px 1px no-repeat, linear-gradient(#3c50a0, #3c50a0) center / 1px 7px no-repeat, #f6f6f6;
}
.row svg { width: 30px; height: 26px; margin-right: 5px; }
.row span { padding: 0 4px; line-height: 30px; white-space: nowrap; }
.row .sel { background: #0078d7; color: #fff; }
.vscroll { width: 25px; padding: 331px 0 26px 11px; }
.vscroll i { display: block; width: 3px; height: 100%; background: #8a8a8a; }
.hscroll { height: 25px; padding: 10px 55px 0 26px; }
.hscroll i { display: block; height: 3px; background: #8a8a8a; }

.mdi { display: flex; flex-direction: column; min-width: 0; min-height: 0; }
.frame { flex: 1; min-height: 0; padding: 4px 2px 4px 4px; border: solid; border-width: 1px 2px 1px 1px; border-color: #a0a0a0 #a0a0a0 #222 #a0a0a0; margin-right: 8px; }
.canvas { height: 100%; background: #fff; border: 2px solid #777; border-right-color: #e3e3e3; border-bottom-color: #e3e3e3; }
.chart { width: 100%; height: 100%; }
.minor { fill: none; stroke: #d8d8d8; stroke-dasharray: 5 3; }
.major { fill: none; stroke: #888; stroke-dasharray: 4 2; }
.chart path { shape-rendering: crispEdges; }
.axis { fill: none; stroke: #222; stroke-width: 2; }
.chart .curve { fill: none; stroke: #c80000; stroke-width: 3; shape-rendering: auto; }
.lbl { font: 15px "Liberation Mono", "Noto Sans CJK SC", monospace; }
.end { text-anchor: end; }
.mid { text-anchor: middle; font-size: 14px; }

.tabs { height: 40px; display: flex; align-items: flex-start; margin-right: 8px; }
.sq { width: 22px; height: 22px; margin: 10px 3px 0 2px; border: solid; border-width: 1px 2px 2px 1px; border-color: #fff #777 #777 #fff; }
.sq svg { width: 19px; height: 19px; }
.sq:last-child { margin-right: 10px; }
.tab { position: relative; height: 38px; display: flex; align-items: center; margin-top: -1px; padding-bottom: 2px; }
.shape { position: absolute; inset: 0; width: 100%; height: 100%; z-index: -1; }
.tab .ic { width: 24px; height: 24px; margin-right: 4px; }
.t1 { width: 126px; margin-left: 4px; padding-left: 37px; z-index: 1; }
.t2 { width: 136px; margin-left: -28px; padding-left: 34px; z-index: 2; }
.t2 b { margin-left: 3px; }
.grow { flex: 1; }

.right .box { border-right: 0; }
.add { height: 42px; margin: 20px 4px 9px 4px; flex: none; background: #fdfdfd; border: 2px solid #1a80d0; border-radius: 6px; }
.times { display: flex; gap: 22px; padding-left: 4px; height: 60px; flex: none; }
.times label { display: flex; flex-direction: column; width: 79px; padding-left: 9px; white-space: nowrap; }
.times .wide { padding-left: 0; margin-left: -2px; }
.times input { width: 79px; height: 22px; margin: 10px 0 0 -9px; padding: 0 2px; font: 16px/20px "Noto Sans", sans-serif; background: #f0f0f0; border: 1px solid #f8f8f8; border-bottom: 1px solid #999; border-radius: 2px; }
.times .wide input { margin-left: 0; }
.tablewrap { flex: 1; min-height: 0; background: #fff; display: flex; flex-direction: column; margin-right: 2px; }
table { width: 100%; border-collapse: collapse; table-layout: fixed; }
.c1 { width: 55px; } .c2 { width: 75px; } .c3 { width: 90px; }
th, td { padding: 0 0 0 8px; text-align: left; font-weight: 400; border-right: 1px solid #eee; white-space: nowrap; }
th { height: 36px; }
td { height: 26px; font-size: 16px; border-bottom: 1px solid #eee; }
td:first-child { padding-left: 6px; }
th:last-child, td:last-child { border-right: 0; }
.swatch { display: block; width: 39px; height: 22px; background: linear-gradient(#f00c0c, #b00000); }
.lines { flex: 1; display: flex; background: repeating-linear-gradient(transparent 0 25px, #eee 25px 26px); }
.lines i { border-right: 1px solid #eee; }
.lines .rest { border: 0; }
.right .hscroll { height: 29px; padding-right: 54px; padding-top: 12px; }

.outtabs { height: 38px; padding: 3px 6px 0; }
.outtabs button { width: 180px; height: 32px; border: 1px solid #a0a0a0; border-bottom: 0; padding-left: 14px; }

footer { height: 32px; display: flex; align-items: center; white-space: nowrap; line-height: 30px; }
.msg { display: flex; gap: 14px; margin-left: 6px; color: #00f; }
.plcstate { margin-left: auto; }
.led { width: 18px; height: 18px; border-radius: 50%; border: 1px solid #222; margin: 0 20px 0 15px; }
.green { background: radial-gradient(circle at 35% 30%, #c8f0c8, #3ca03c); }
.orange { background: radial-gradient(circle at 35% 30%, #ffe860, #ff9800); }
.fault { width: 96px; text-align: center; background: #ff0; color: #00f; }
.orange { margin: 0 20px 0 3px; }
.blue { background: #00f; color: #fff; padding-left: 3px; border-top: 1px solid #999; }
.ver { width: 387px; }
.cpu { width: 213px; margin-left: 5px; }
.cell { border: solid #a0a0a0; border-width: 1px 0 0 1px; margin-left: 5px; padding-left: 3px; }
.mode { width: 43px; }
.pos { width: 229px; display: flex; gap: 8px; color: #777; }
.pos span:nth-child(2) { margin-left: 12px; }
.pos span:nth-child(4) { margin-left: 16px; }
.edge { height: 4px; flex: none; background: #d5e8f0; border-top: 2px solid #a8b4b8; }
.mark {
  position: absolute; right: 5px; bottom: 15px; font: 300 50px/56px "Open Sans", "Noto Sans", sans-serif;
  color: rgba(235, 235, 235, .75); text-shadow: 1px 2px 1px rgba(90, 90, 90, .55);
}
```
